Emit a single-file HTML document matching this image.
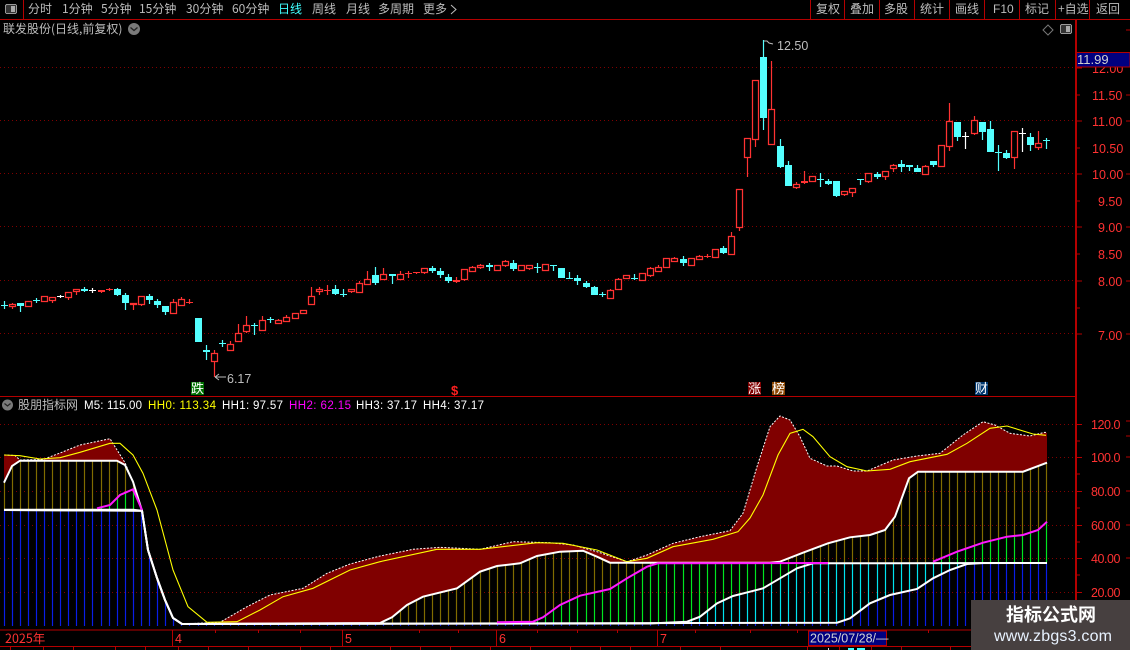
<!DOCTYPE html>
<html><head><meta charset="utf-8"><style>
html,body{margin:0;padding:0;background:#000;width:1130px;height:650px;overflow:hidden}
svg{display:block;position:absolute;left:0;top:0}
text{font-family:"Liberation Sans","WenQuanYi Zen Hei","Noto Sans CJK SC",sans-serif;font-size:12px;fill:#bdbdbd}
.c{font-family:"WenQuanYi Zen Hei","Noto Sans CJK SC",sans-serif;font-size:12px}
.n{font-size:12.5px;fill:#ff3232}
.v{font-size:11.5px}
</style></head><body>
<svg id="s" width="1130" height="650" viewBox="0 0 1130 650" shape-rendering="crispEdges">
<g id="grid" stroke="#800000" stroke-dasharray="1 3" stroke-width="1">
<path d="M0 67.5H1075M0 120.5H1075M0 173.5H1075M0 226.5H1075M0 280.5H1075M0 333.5H1075M0 424.5H1075M0 457.5H1075M0 491.5H1075M0 525.5H1075M0 558.5H1075M0 592.5H1075"/>
</g>
<g id="candles" shape-rendering="auto"></g>
<path id="area" fill="#800000" stroke="none" shape-rendering="auto"/>
<g id="bars" stroke-width="1.2" shape-rendering="auto"></g>
<g id="lines" fill="none" shape-rendering="auto"></g>

<!-- frame -->
<g stroke="#b40000" stroke-width="1" fill="none">
<path d="M0 19.5H1130M23.5 0V19M0 396.5H1076M0 630H1076M0 646.5H1076" stroke-width="1.2"/>
<path d="M810.5 0V19M844.5 0V19M879.5 0V19M914.5 0V19M949.5 0V19M984.5 0V19M1019.5 0V19M1055.5 0V19M1089.5 0V19"/>
<path d="M1075.5 20V650M1076.5 20V650"/>
<path d="M172.5 630V646M342.5 630V646M496.5 630V646M657.5 630V646"/>
<path d="M215.5 630V633M258.5 630V633M300.5 630V633M419.5 630V633M458.5 630V633M537.5 630V633M577.5 630V633M617.5 630V633M695.5 630V633M750.5 630V633M797.5 630V633M928.5 630V633"/>
<path d="M10.5 647V650M43.5 647V650M73.5 647V650M115.5 647V650M145.5 647V650M178.5 647V650M208.5 647V650M248.5 647V650M300.5 647V650M330.5 647V650M390.5 647V650M420.5 647V650M450.5 647V650M490.5 647V650M530.5 647V650M570.5 647V650M600.5 647V650M630.5 647V650M680.5 647V650M720.5 647V650M807.5 647V650M839.5 647V650M871.5 647V650M901.5 647V650M950.5 647V650"/>
<path d="M1077 68H1082M1077 95H1080M1077 121H1082M1077 148H1080M1077 174H1082M1077 201H1080M1077 227H1082M1077 254H1080M1077 281H1082M1077 308H1080M1077 334H1082M1077 424.5H1082M1077 441H1080M1077 457.5H1082M1077 474H1080M1077 491.5H1082M1077 508H1080M1077 525.5H1082M1077 542H1080M1077 558.5H1082M1077 575H1080M1077 592.5H1082M1126 30H1130M1126 95H1130M1126 121H1130M1126 174H1130M1126 227H1130M1126 281H1130M1126 334H1130M1126 421H1130M1126 436H1130M1126 457H1130M1126 491H1130M1126 525H1130M1126 558H1130"/>
</g>

<!-- toolbar -->
<rect x="5.5" y="4.5" width="11" height="9" rx="1.5" fill="#333" stroke="#999"/><rect x="11" y="6" width="4" height="6" fill="#aaa"/>
<text class="c" x="28" y="13">分时</text><text class="c" x="62" y="13">1分钟</text><text class="c" x="101" y="13">5分钟</text><text class="c" x="139" y="13">15分钟</text><text class="c" x="186" y="13">30分钟</text><text class="c" x="232" y="13">60分钟</text>
<text class="c" x="278" y="13" style="fill:#40ffff">日线</text><text class="c" x="312" y="13">周线</text><text class="c" x="346" y="13">月线</text><text class="c" x="378" y="13">多周期</text><text class="c" x="423" y="13">更多</text>
<path d="M451 5l5 4.5-5 4.5" stroke="#bdbdbd" fill="none" shape-rendering="auto"/>
<text class="c" x="816" y="13">复权</text><text class="c" x="850" y="13">叠加</text><text class="c" x="884" y="13">多股</text><text class="c" x="920" y="13">统计</text><text class="c" x="955" y="13">画线</text><text x="993" y="13">F10</text><text class="c" x="1025" y="13">标记</text><text class="c" x="1058" y="13">+自选</text><text class="c" x="1096" y="13">返回</text>

<!-- title -->
<text class="c" x="3" y="33">联发股份(日线,前复权)</text>
<circle cx="134" cy="29" r="6" fill="#7a7a7a" shape-rendering="auto"/><path d="M130.5 27.5l3.5 3 3.5-3" stroke="#222" stroke-width="1.3" fill="none" shape-rendering="auto"/>
<path d="M1048 25l5 5-5 5-5-5z" stroke="#777" fill="none" shape-rendering="auto"/>
<rect x="1060.5" y="24.5" width="11" height="9" rx="1.5" fill="#333" stroke="#999"/><rect x="1066" y="26" width="4" height="6" fill="#aaa"/>

<!-- price labels -->
<g>
<text class="n" x="1092" y="73">12.00</text><text class="n" x="1092" y="100">11.50</text><text class="n" x="1092" y="126">11.00</text><text class="n" x="1092" y="153">10.50</text><text class="n" x="1092" y="179">10.00</text><text class="n" x="1098" y="206">9.50</text><text class="n" x="1098" y="232">9.00</text><text class="n" x="1098" y="259">8.50</text><text class="n" x="1098" y="286">8.00</text><text class="n" x="1098" y="340">7.00</text>
<text class="n" x="1091" y="429" textLength="29.5">120.0</text><text class="n" x="1091" y="462" textLength="29.5">100.0</text><text class="n" x="1091" y="496" textLength="29.5">80.00</text><text class="n" x="1091" y="530" textLength="29.5">60.00</text><text class="n" x="1091" y="563" textLength="29.5">40.00</text><text class="n" x="1091" y="597" textLength="29.5">20.00</text>
</g>
<rect x="1076.5" y="52.5" width="53.5" height="14.5" fill="#000080" stroke="#b40000"/>
<text x="1077" y="64" style="font-size:13px;fill:#d0d0d0">11.99</text>

<!-- annotations -->
<path d="M764 41h3l2 2 4 1" stroke="#bbb" fill="none" shape-rendering="auto"/>
<text x="777" y="50" style="font-size:12.5px">12.50</text>
<path d="M215 377H226M215 377l4-3M215 377l4 3" stroke="#bbb" fill="none" shape-rendering="auto"/>
<text x="227" y="383" style="font-size:12.5px">6.17</text>

<!-- badges -->
<rect x="191" y="382" width="13" height="13" fill="#007000"/><text class="c" x="191" y="393" style="fill:#fff;font-size:13px">跌</text>
<text x="451" y="395" style="fill:#ff2020;font-size:13px;font-weight:bold">$</text>
<rect x="748" y="382" width="13" height="13" fill="#800000"/><text class="c" x="748" y="393" style="fill:#fff;font-size:13px">涨</text>
<rect x="772" y="382" width="13" height="13" fill="#8b4500"/><text class="c" x="772" y="393" style="fill:#fff;font-size:13px">榜</text>
<rect x="975" y="382" width="13" height="13" fill="#003870"/><text class="c" x="975" y="393" style="fill:#fff;font-size:13px">财</text>

<!-- indicator title -->
<circle cx="7.5" cy="405" r="5.5" fill="#7a7a7a" shape-rendering="auto"/><path d="M4.5 403.5l3 2.5 3-2.5" stroke="#222" stroke-width="1.2" fill="none" shape-rendering="auto"/>
<text class="c" x="18" y="409">股朋指标网</text>
<text class="v" x="84" y="409" textLength="58" style="fill:#fff">M5: 115.00</text>
<text class="v" x="148" y="409" textLength="68" style="fill:#ffff00">HH0: 113.34</text>
<text class="v" x="222" y="409" textLength="61" style="fill:#fff">HH1: 97.57</text>
<text class="v" x="289" y="409" textLength="62" style="fill:#ff00ff">HH2: 62.15</text>
<text class="v" x="356" y="409" textLength="61" style="fill:#fff">HH3: 37.17</text>
<text class="v" x="423" y="409" textLength="61" style="fill:#fff">HH4: 37.17</text>

<!-- time axis -->
<text x="5" y="643" style="fill:#ff3232;font-size:12.5px" class="c">2025年</text>
<text x="175" y="643" style="fill:#ff3232;font-size:12.5px">4</text>
<text x="345" y="643" style="fill:#ff3232;font-size:12.5px">5</text>
<text x="499" y="643" style="fill:#ff3232;font-size:12.5px">6</text>
<text x="660" y="643" style="fill:#ff3232;font-size:12.5px">7</text>
<rect x="808.5" y="631" width="78" height="14.5" fill="#000080" stroke="#b40000"/>
<text x="810" y="642.5" style="font-size:12.5px;fill:#d0d0d0">2025/07/28/—</text>
<rect x="828" y="648" width="1" height="2" fill="#ddd"/><rect x="848" y="648" width="6" height="2" fill="#40ffff"/><rect x="857" y="648" width="8" height="2" fill="#40ffff"/>

<!-- watermark -->
<rect x="971" y="600" width="159" height="50" fill="#474040"/>
<text x="1006" y="621" style="fill:#fff;font-size:18px;font-weight:bold;font-family:'Noto Sans CJK SC',sans-serif">指标公式网</text>
<text x="994" y="641" style="fill:#e8f2ff;font-size:16px" textLength="118">www.zbgs3.com</text>
</svg>
<script>
var NS='http://www.w3.org/2000/svg';
function el(p,n,a){var e=document.createElementNS(NS,n);for(var k in a)e.setAttribute(k,a[k]);p.appendChild(e);return e}
function X(i){return 4+Math.floor(i*97/12)}
var D="c,304.5,305.5,301,309;r,303.5,305.5,303,309;c,303,305.7,303,311.7;r,300.5,305.5,300.5,306.7;c,300,301,298,302.7;r,296.3,301.3,296.3,301.3;r,296.7,299.7,296.7,302.7;w,296,297,294.7,298;r,291.7,296.7,291.7,300;r,289.3,291.3,289.3,294.7;c,288.7,290.7,286.7,292;w,290,291,288.3,292.7;R,290.3,291.7,290.3,292.7;R,289,290,288,290.7;c,288.7,295,288,296;c,295,302.7,293.3,310;r,303,303.8,303,310;r,296.3,303.7,296.3,306;c,295.7,300,294,303.7;c,301,305,299.3,307.7;c,306,312,306,315;r,302.3,312.7,299.3,312.7;r,299,304.7,297.3,304.7;R,301.5,302.5,299.3,304;c,318,342,318,342;c,350,352.3,345,360;r,353.3,360.7,350.3,376.7;c,343,344,340,347.3;r,344.3,349.7,341,349.7;r,333.3,340.7,324,340.7;r,325.3,330.7,316,333.3;c,325,326,322.7,334.7;r,319.7,329.7,316,330.7;c,319,320,316.7,323.3;r,320.3,322.7,319.3,324;r,317.3,320.7,315,320.7;r,313.3,317.7,313.3,317.7;r,309.7,313,309.7,314;r,296.3,304.3,287.3,304.3;r,289.3,291.3,287.3,295;R,290,291,285,294.7;c,289,294,285,295;c,294,295,289.3,297.3;r,289.3,291.3,289.3,293.3;r,283.3,291.7,280.7,292.7;r,279.3,283.7,271,285;c,275,282.7,267,284.7;r,274.3,279.3,268,279.3;c,274.3,275.7,274.3,284;r,274.3,279,271.3,279;R,273,273.7,271.3,278;R,272.3,273,272.3,274;r,268.3,272.3,268.3,273.7;c,268,270.7,266,273;c,271,275,268,278;c,277,281,274,282.7;R,280.3,281.7,277.3,282.7;r,269.3,278.7,269.3,280.7;r,267.3,271.3,266,271.3;r,265.3,267.3,264,268.7;c,265,266.7,263,270.7;r,265.3,269.7,265.3,270.3;r,261.3,265.3,260,266.7;c,263,269,260,270.7;r,265.3,269.7,265.3,270.7;r,265.3,268.3,265.3,269.7;c,267,268,263,272.7;r,264.3,269.7,264.3,269.7;c,264.5,265.5,264.5,270.7;c,268,278,268,278;c,278,279,272,279;c,278,280.7,275,285;c,283,287,281,288;c,287,294.7,286,294.7;c,294,295,292,297;r,290.3,298,289.3,299;r,279.3,288.7,278.3,288.7;r,275.3,277.7,275.3,277.7;c,277.7,278.7,274,280;r,273.3,279.7,273.3,279.7;r,268.3,274.7,267,277;r,267.3,270.7,265.3,270.7;r,258.3,266.7,258.3,268;r,258.3,260.7,257.3,260.7;c,259,263,256,266;r,258.3,264.7,258.3,264.7;r,256.3,258.7,255.3,258.7;R,256,256.8,254,258;r,249.3,256.7,249.3,256.7;c,248,253,246,254;r,236.3,253.7,232,253.7;r,189.3,226.7,189.3,230.7;r,138.3,156.7,138.3,176.7;r,80.3,138.7,80.3,146.7;c,57,117.7,40,130;r,109.3,143.7,61,143.7;c,146,166.7,139,168;c,165,185.7,161,185.7;r,184.3,186.7,182,188.7;R,181.3,182.7,171,184;r,176.3,180.7,176.3,180.7;c,179.3,180.3,173.3,186.7;c,181,183.7,179.3,184.7;c,181,195.7,181,196.7;r,191.3,193.7,191.3,196;r,188.3,191.7,188.3,196.7;c,179,180,179,184.7;r,173.3,180.7,173.3,182.7;c,173.7,177.3,172,178.7;r,171.3,176.3,171.3,179.7;r,165.3,167.7,164,172;c,164.3,167,160.3,172;c,165.3,166.7,165.3,170.7;c,168,172,165.3,172;r,166.3,173.7,165.3,173.7;c,161.3,164.7,161.3,166.7;r,145.3,165.7,145.3,165.7;r,121.3,145.7,103,150.7;c,122,136.7,122,140.7;w,136,137,132.3,148.7;r,120.3,132.7,116,134.7;c,122,131.7,122,139.7;c,129,151.7,121.3,151.7;c,152,153,145.3,170.7;c,153,157.7,150.3,158.7;r,131.3,157.3,131.3,168.7;w,133,134,128.3,151.7;c,137,144.7,133.3,150.7;r,143.3,146.7,131.3,149.7;c,139.7,141.3,138.3,148.7".split(';');
var g=document.getElementById('candles');
D.forEach(function(s,i){
 var a=s.split(','),t=a[0],b=Math.round(+a[1]),e=Math.round(+a[2]),h=Math.round(+a[3]),l=Math.round(+a[4]),x=X(i);
 var col=t=='c'?'#54ffff':t=='w'?'#ffffff':'#ff3232';
 if(h<b)el(g,'rect',{x:x-.1,y:h,width:1.2,height:b-h,fill:col});
 if(l>e)el(g,'rect',{x:x-.1,y:e,width:1.2,height:l-e,fill:col});
 if(t=='r'){el(g,'rect',{x:x-2.5,y:b+.5,width:6,height:Math.max(e-b,1),fill:'#000',stroke:col,'stroke-width':1.25})}
 else{el(g,'rect',{x:x-3,y:b,width:7,height:Math.max(e-b,1),fill:col})}
});
var U=[[4,455],[15,455.5],[20,460],[43,459.5],[60,453],[80,445],[110,438.7],[125,462.7],[133,481.7],[142,510.7],[148,550],[157,578],[165,600],[173,618],[182,624],[220,622.3],[247,606.7],[270,595],[303,588.3],[327,573.3],[350,564],[380,556],[413,549.3],[440,547.3],[480,549.3],[513,541.7],[550,542.7],[573,545],[597,551.7],[627,561.7],[647,555],[673,543.3],[700,536.7],[730,530.7],[743,513.3],[750,490],[757,466.7],[770,426.7],[780,416],[790,420],[800,436.7],[810,458.3],[827,466],[837,466],[853,471],[867,471],[893,460],[917,456],[940,453.3],[963,435],[983,421.7],[995,425],[1010,433.3],[1030,436],[1045,432.3],[1047,433]];
var Y=[[4,455],[20,455.7],[40,459],[60,457.7],[80,452.3],[110,443.3],[120,443.3],[133,455],[143,473.3],[157,510],[173,570],[188,606.7],[207,622.3],[237,621.7],[260,610],[283,596.7],[313,588.3],[350,570],[380,561.7],[437,549.3],[480,549.3],[537,542.7],[563,543.3],[597,550],[627,561.7],[647,558.3],[673,546.7],[713,539.3],[738,531.7],[750,518],[763,495],[778,455],[790,433.3],[803,429.3],[813,436.7],[830,456.7],[847,466.7],[867,471],[890,469.3],[910,461.7],[947,454.3],[967,443.3],[990,428.3],[1007,426],[1033,434],[1046,435.3]];
var H1=[[4,482.7],[12,466],[20,460.7],[117,460.7],[125,465],[133,481.7],[142,510.7],[148,550],[157,578],[165,600],[173,618],[182,624],[380,623],[392,617.3],[407,605],[423,596.7],[457,588.3],[480,571.7],[497,566],[520,563.3],[537,556],[560,551.7],[583,550.7],[597,556.7],[610,562.7],[770,562.7],[780,561.7],[803,552.7],[828,543.3],[850,537.3],[870,535],[885,530],[895,516.7],[909,478.3],[918,471.7],[1023,471.7],[1047,462.7]];
var H2m1=[[97,508.3],[110,505],[120,495],[133,489.3],[142,510]];
var H2m2=[[497,622.3],[533,621.7],[543,617.3],[560,605],[580,595.7],[610,589],[627,578.3],[647,566.7],[658,563.3],[828,563]];
var H2m3=[[933,561.7],[957,551.7],[983,542.7],[1007,536.7],[1023,535],[1038,530],[1047,521.7]];
var H2=[[4,510],[97,510]].concat(H2m1).concat([[148,550],[157,578],[165,600],[173,618],[182,624],[497,624]]).concat(H2m2.slice(1)).concat([[933,562.7]]).concat(H2m3.slice(1));
var H3=[[4,510],[142,510.7],[148,550],[157,578],[165,600],[173,618],[182,624],[650,623.5],[687,621.7],[700,616.7],[717,603.3],[733,596],[750,591.7],[763,588.3],[780,578.3],[797,568.3],[813,563.3],[1047,563]];
var H4=[[4,510],[142,510.7],[148,550],[157,578],[165,600],[173,618],[182,624],[837,622.7],[850,618.3],[870,603.3],[890,595],[917,589],[933,578.3],[950,570],[967,564],[983,563],[1047,563]];
function f(L,x){if(x<=L[0][0])return L[0][1];for(var i=1;i<L.length;i++)if(x<=L[i][0]){var a=L[i-1],b=L[i];return a[1]+(b[1]-a[1])*(x-a[0])/(b[0]-a[0]||1)}return L[L.length-1][1]}
function P(L){return L.map(function(p){return p[0]+' '+p[1]}).join('L')}
document.getElementById('area').setAttribute('d','M'+P(U)+'L'+P(H1.slice().reverse())+'Z');
var bg=document.getElementById('bars');
for(var i=0;i<130;i++){
 var x=X(i)+.5;
 var a=f(H1,x),b=f(H2,x),c=f(H3,x),d=f(H4,x);
 b=Math.max(b,a);c=Math.max(c,b);d=Math.max(d,c);
 var seg=[[a,b,'#806c00'],[b,c,'#00e620'],[c,d,'#00e4ee'],[d,626,'#0a1ee6']];
 seg.forEach(function(s){if(s[1]-s[0]>.6)el(bg,'path',{d:'M'+x+' '+Math.round(s[0])+'V'+Math.round(s[1]),stroke:s[2]})});
}
var lg=document.getElementById('lines');
el(lg,'path',{d:'M'+P(U),stroke:'#fff','stroke-width':1,'stroke-dasharray':'2 1.5'});
el(lg,'path',{d:'M'+P(Y),stroke:'#ffff00','stroke-width':1.1});
el(lg,'path',{d:'M4 509.7L133 509.7L142 510.7',stroke:'#fff','stroke-width':2});
el(lg,'path',{d:'M'+P(H4),stroke:'#fff','stroke-width':2});
el(lg,'path',{d:'M'+P(H3),stroke:'#fff','stroke-width':2});
el(lg,'path',{d:'M'+P(H1),stroke:'#fff','stroke-width':2});
[H2m1,H2m2,H2m3].forEach(function(L){el(lg,'path',{d:'M'+P(L),stroke:'#ff18ff','stroke-width':2})});
</script>
</body></html>
